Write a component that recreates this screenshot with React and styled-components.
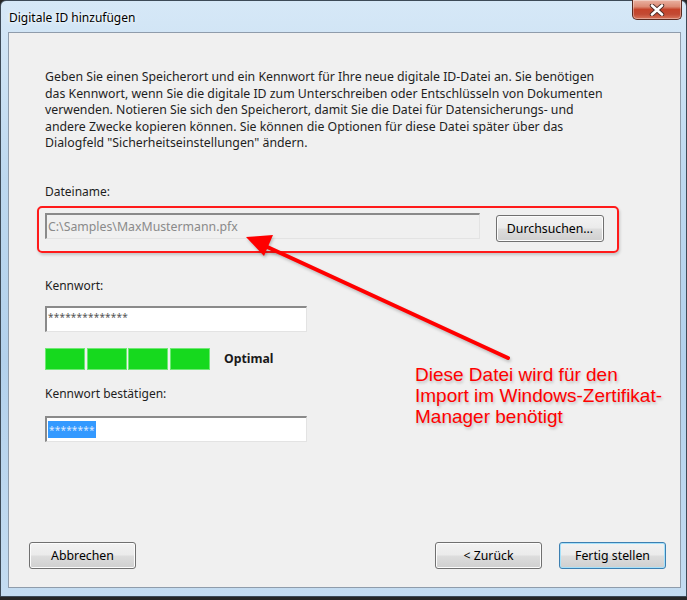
import React from "react";
import styled, { createGlobalStyle } from "styled-components";

const Global = createGlobalStyle`
  html, body { margin: 0; padding: 0; background: #262626; }
  body { width: 687px; height: 600px; overflow: hidden; }
  * { box-sizing: border-box; }
`;

const Window = styled.div`
  position: relative;
  width: 687px;
  height: 597px;
  display: flex;
  flex-direction: column;
  border: 1px solid #3d4a57;
  border-radius: 6px 6px 0 0;
  background: linear-gradient(180deg, #d6e8f7 0%, #bdd8ef 30%, #b3d1ec 60%, #c4dcf1 100%);
  font-family: "Segoe UI", "Noto Sans", sans-serif;
  color: #1e1e1e;
`;

const TitleBar = styled.div`
  height: 31px;
  display: flex;
  align-items: flex-start;
  justify-content: space-between;
  padding-left: 8px;
  padding-right: 4px;
`;

const Title = styled.div`
  margin-top: 8px;
  font-size: 12px;
  color: #000;
  text-shadow: 0 0 6px rgba(255,255,255,0.95), 0 0 3px rgba(255,255,255,0.9);
`;

const CloseButton = styled.div`
  width: 50px;
  height: 20px;
  margin-top: -1px;
  border: 1px solid #5a2a20;
  border-top: none;
  border-radius: 0 0 5px 5px;
  background: linear-gradient(180deg, #eab2a2 0%, #dc8a74 35%, #c5432a 50%, #c24a33 75%, #d8765c 100%);
  display: flex;
  align-items: center;
  justify-content: center;
  box-shadow: inset 0 0 0 1px rgba(255,255,255,0.35);
`;

const Panel = styled.div`
  position: relative;
  flex: 1;
  margin: 0 5px 8px 7px;
  border: 1px solid #8f9cab;
  background: #f0f0f0;
  display: flex;
  flex-direction: column;
  padding: 36px 14px 18px 36px;
  font-size: 12px;
`;

const Intro = styled.p`
  margin: 0;
  font-size: 12.3px;
  line-height: 16.6px;
  white-space: nowrap;
`;

const Label = styled.div`
  line-height: 16px;
  margin-top: ${p => p.$mt}px;
`;

const Highlight = styled.div`
  margin-top: 6px;
  margin-left: -8px;
  width: 582px;
  height: 47px;
  border: 2px solid #ff1a1a;
  border-radius: 5px;
  box-shadow: 1px 2px 3px rgba(0,0,0,0.18);
  display: flex;
  align-items: flex-start;
  padding: 5px 0 0 6px;
  gap: 16px;
`;

const TextField = styled.div`
  width: ${p => p.$w}px;
  height: ${p => p.$h || 26}px;
  margin-top: ${p => p.$mt || 0}px;
  border: 1px solid #e3e3e3;
  border-top: 2px solid #8a8a8a;
  border-left: 2px solid #8a8a8a;
  background: ${p => (p.$disabled ? "#f0f0f0" : "#ffffff")};
  color: ${p => (p.$disabled ? "#8a8a8a" : "#555")};
  display: flex;
  align-items: center;
  padding-left: 1px;
  font-size: 12.3px;
  white-space: nowrap;
`;

const Stars = styled.span`
  font-size: 10px;
  letter-spacing: 0.2px;
  color: ${p => (p.$selected ? "#dce9ff" : "#555")};
  background: ${p => (p.$selected ? "#3399ff" : "transparent")};
  padding: ${p => (p.$selected ? "3px 1px 2px 1px" : "0 0 4px 0")};
  line-height: 12px;
`;

const Button = styled.div`
  width: ${p => p.$w}px;
  height: 27px;
  margin-top: ${p => p.$mt || 0}px;
  margin-left: ${p => p.$ml || 0}px;
  border: 1px solid ${p => (p.$default ? "#3c7fb1" : "#707070")};
  border-radius: 3px;
  background: linear-gradient(180deg, #f2f2f2 0%, #ebebeb 48%, #dddddd 52%, #cfcfcf 100%);
  box-shadow: inset 0 0 0 1px ${p => (p.$default ? "#a6e1fa" : "#fcfcfc")};
  display: flex;
  align-items: center;
  justify-content: center;
  font-size: 12.3px;
  color: #000;
`;

const Strength = styled.div`
  margin-top: 16px;
  display: flex;
  align-items: center;
  height: 22px;
`;

const Segment = styled.div`
  width: 40px;
  height: 22px;
  margin-right: 1.5px;
  background: #16d91e;
  border: 1px solid #6fe874;
`;

const StrengthText = styled.div`
  margin-left: 13px;
  font-weight: bold;
  font-size: 12.3px;
  color: #1a1a1a;
`;

const Footer = styled.div`
  margin-top: auto;
  margin-left: -16px;
  display: flex;
  align-items: center;
`;

const Spacer = styled.div`
  flex: 1;
`;

const Note = styled.div`
  position: absolute;
  left: 406px;
  top: 331px;
  font-family: "Liberation Sans", Arial, sans-serif;
  font-size: 19px;
  line-height: 21px;
  color: #ff0000;
  text-shadow: 1px 2px 3px rgba(0,0,0,0.22);
  white-space: nowrap;
`;

const ArrowLayer = styled.svg`
  position: absolute;
  left: 0;
  top: 0;
  pointer-events: none;
  filter: drop-shadow(1px 2px 1.5px rgba(0,0,0,0.22));
`;

export default function App() {
  return (
    <>
      <Global />
      <Window>
        <TitleBar>
          <Title>Digitale ID hinzufügen</Title>
          <CloseButton>
            <svg width="16" height="12" viewBox="0 0 16 12">
              <path d="M3 1.5 L13 10.5 M13 1.5 L3 10.5" stroke="#4a2a25" strokeWidth="4.4" strokeLinecap="round" />
              <path d="M3 1.5 L13 10.5 M13 1.5 L3 10.5" stroke="#ffffff" strokeWidth="2.6" strokeLinecap="round" />
            </svg>
          </CloseButton>
        </TitleBar>
        <Panel>
          <Intro>
            Geben Sie einen Speicherort und ein Kennwort für Ihre neue digitale ID-Datei an. Sie benötigen<br />
            das Kennwort, wenn Sie die digitale ID zum Unterschreiben oder Entschlüsseln von Dokumenten<br />
            verwenden. Notieren Sie sich den Speicherort, damit Sie die Datei für Datensicherungs- und<br />
            andere Zwecke kopieren können. Sie können die Optionen für diese Datei später über das<br />
            Dialogfeld "Sicherheitseinstellungen" ändern.
          </Intro>
          <Label $mt={32}>Dateiname:</Label>
          <Highlight>
            <TextField $w={435} $disabled>C:\Samples\MaxMustermann.pfx</TextField>
            <Button $w={108} $mt={2}>Durchsuchen...</Button>
          </Highlight>
          <Label $mt={25}>Kennwort:</Label>
          <TextField $w={262} $mt={12}>
            <Stars>**************</Stars>
          </TextField>
          <Strength>
            <Segment />
            <Segment />
            <Segment />
            <Segment />
            <StrengthText>Optimal</StrengthText>
          </Strength>
          <Label $mt={16}>Kennwort bestätigen:</Label>
          <TextField $w={262} $mt={14}>
            <Stars $selected>********</Stars>
          </TextField>
          <Footer>
            <Button $w={107}>Abbrechen</Button>
            <Spacer />
            <Button $w={107}>&lt; Zurück</Button>
            <Button $w={107} $ml={17} $default>Fertig stellen</Button>
          </Footer>
          <Note>
            Diese Datei wird für den<br />
            Import im Windows-Zertifikat-<br />
            Manager benötigt
          </Note>
        </Panel>
        <ArrowLayer width="687" height="597" viewBox="0 0 687 597">
          <line x1="507" y1="357" x2="262" y2="244" stroke="#ff0000" strokeWidth="4" strokeLinecap="round" />
          <polygon points="245,236 272,234 263,255" fill="#ff0000" />
        </ArrowLayer>
      </Window>
    </>
  );
}
